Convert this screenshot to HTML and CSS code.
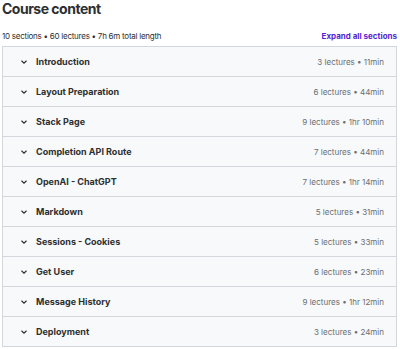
FILE: index.html
```html
<!DOCTYPE html>
<html>
<head>
  <link rel="stylesheet" href="styles.css">
</head>
<body>
  <div class="container">
    <h2 class="title">Course content</h2>
    <div class="summary">
      <span class="summary_text">10 sections • 60 lectures • 7h 6m total length</span>
      <span class="expand">Expand all sections</span>
    </div>
    <div class="sections">
      <div class="section">
        <span class="chevron"><svg width="8" height="8" viewBox="0 0 8 8"><path d="M1.5 2.8 L4 5.2 L6.5 2.8" fill="none" stroke="#2d2f31" stroke-width="1.2"/></svg></span>
        <span class="section_title">Introduction</span>
        <span class="section_info">3 lectures • 11min</span>
      </div>
      <div class="section">
        <span class="chevron"><svg width="8" height="8" viewBox="0 0 8 8"><path d="M1.5 2.8 L4 5.2 L6.5 2.8" fill="none" stroke="#2d2f31" stroke-width="1.2"/></svg></span>
        <span class="section_title">Layout Preparation</span>
        <span class="section_info">6 lectures • 44min</span>
      </div>
      <div class="section">
        <span class="chevron"><svg width="8" height="8" viewBox="0 0 8 8"><path d="M1.5 2.8 L4 5.2 L6.5 2.8" fill="none" stroke="#2d2f31" stroke-width="1.2"/></svg></span>
        <span class="section_title">Stack Page</span>
        <span class="section_info">9 lectures • 1hr 10min</span>
      </div>
      <div class="section">
        <span class="chevron"><svg width="8" height="8" viewBox="0 0 8 8"><path d="M1.5 2.8 L4 5.2 L6.5 2.8" fill="none" stroke="#2d2f31" stroke-width="1.2"/></svg></span>
        <span class="section_title">Completion API Route</span>
        <span class="section_info">7 lectures • 44min</span>
      </div>
      <div class="section">
        <span class="chevron"><svg width="8" height="8" viewBox="0 0 8 8"><path d="M1.5 2.8 L4 5.2 L6.5 2.8" fill="none" stroke="#2d2f31" stroke-width="1.2"/></svg></span>
        <span class="section_title">OpenAI - ChatGPT</span>
        <span class="section_info">7 lectures • 1hr 14min</span>
      </div>
      <div class="section">
        <span class="chevron"><svg width="8" height="8" viewBox="0 0 8 8"><path d="M1.5 2.8 L4 5.2 L6.5 2.8" fill="none" stroke="#2d2f31" stroke-width="1.2"/></svg></span>
        <span class="section_title">Markdown</span>
        <span class="section_info">5 lectures • 31min</span>
      </div>
      <div class="section">
        <span class="chevron"><svg width="8" height="8" viewBox="0 0 8 8"><path d="M1.5 2.8 L4 5.2 L6.5 2.8" fill="none" stroke="#2d2f31" stroke-width="1.2"/></svg></span>
        <span class="section_title">Sessions - Cookies</span>
        <span class="section_info">5 lectures • 33min</span>
      </div>
      <div class="section">
        <span class="chevron"><svg width="8" height="8" viewBox="0 0 8 8"><path d="M1.5 2.8 L4 5.2 L6.5 2.8" fill="none" stroke="#2d2f31" stroke-width="1.2"/></svg></span>
        <span class="section_title">Get User</span>
        <span class="section_info">6 lectures • 23min</span>
      </div>
      <div class="section">
        <span class="chevron"><svg width="8" height="8" viewBox="0 0 8 8"><path d="M1.5 2.8 L4 5.2 L6.5 2.8" fill="none" stroke="#2d2f31" stroke-width="1.2"/></svg></span>
        <span class="section_title">Message History</span>
        <span class="section_info">9 lectures • 1hr 12min</span>
      </div>
      <div class="section">
        <span class="chevron"><svg width="8" height="8" viewBox="0 0 8 8"><path d="M1.5 2.8 L4 5.2 L6.5 2.8" fill="none" stroke="#2d2f31" stroke-width="1.2"/></svg></span>
        <span class="section_title">Deployment</span>
        <span class="section_info">3 lectures • 24min</span>
      </div>
    </div>
  </div>
</body>
</html>
```
FILE: styles.css
```css
body {
  font-family: 'Inter', sans-serif;
  margin: 0;
  background-color: #ffffff;
  color: #2d2f31;
  overflow: hidden;
}
.container {
  padding-left: 2px;
  padding-right: 3px;
}
.title {
  font-size: 14px;
  font-weight: 700;
  line-height: 17px;
  margin: 0;
  letter-spacing: -0.5px;
}
.summary {
  display: flex;
  justify-content: space-between;
  align-items: center;
  height: 20px;
  margin-top: 9px;
}
.summary_text {
  font-size: 8px;
  letter-spacing: -0.25px;
  color: #2d2f31;
}
.expand {
  font-size: 8px;
  font-weight: 700;
  color: #5624d0;
}
.sections {
  border: 1px solid #d1d7dc;
  border-bottom: none;
}
.section {
  display: flex;
  align-items: center;
  height: 29px;
  border-bottom: 1px solid #d1d7dc;
  background-color: #f7f9fa;
  padding-left: 17px;
  padding-right: 12px;
}
.chevron {
  display: flex;
  width: 8px;
  margin-right: 8px;
}
.section_title {
  flex: 1;
  font-size: 9px;
  font-weight: 700;
}
.section_info {
  font-size: 8px;
  color: #6a6f73;
}
```
